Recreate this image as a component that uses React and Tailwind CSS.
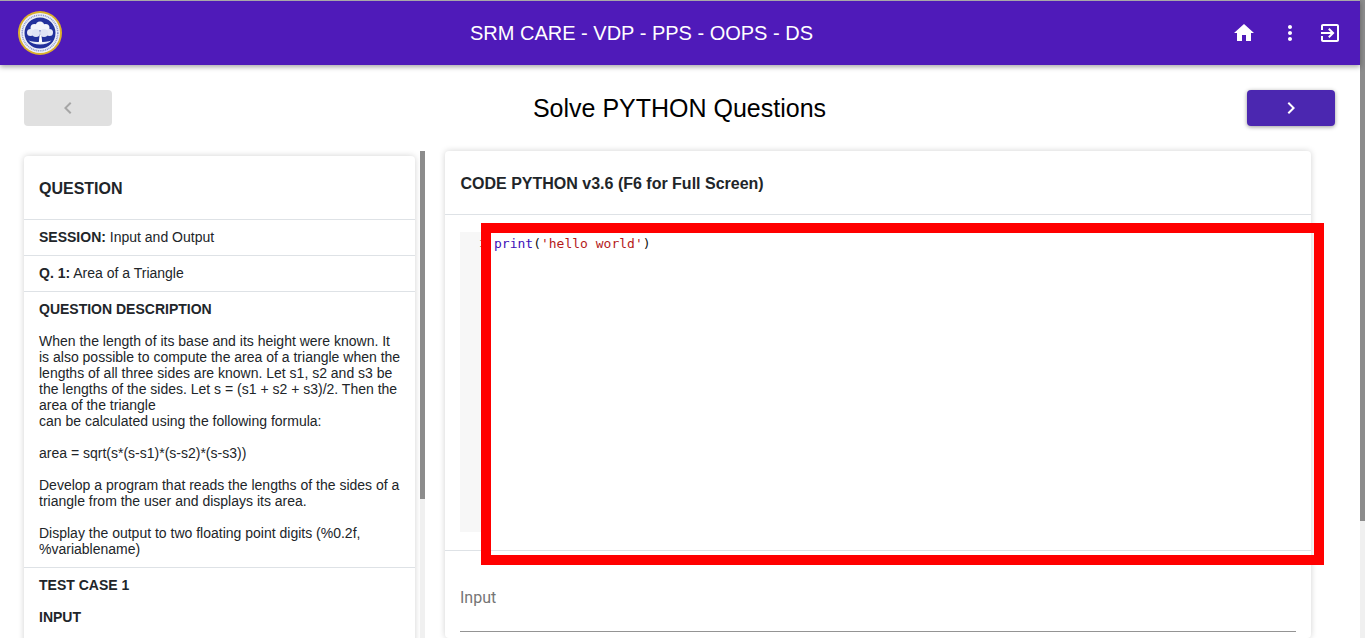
import React from 'react'

const sans = "font-['Liberation_Sans',Arial,sans-serif]"

function Icon({ d, className }) {
  return (
    <svg viewBox="0 0 24 24" fill="currentColor" className={className}>
      <path d={d} />
    </svg>
  )
}

const paths = {
  home: 'M10 20v-6h4v6h5v-8h3L12 3 2 12h3v8z',
  more: 'M12 8c1.1 0 2-.9 2-2s-.9-2-2-2-2 .9-2 2 .9 2 2 2zm0 2c-1.1 0-2 .9-2 2s.9 2 2 2 2-.9 2-2-.9-2-2-2zm0 6c-1.1 0-2 .9-2 2s.9 2 2 2 2-.9 2-2-.9-2-2-2z',
  exit: 'M10.09 15.59L11.5 17l5-5-5-5-1.41 1.41L12.67 11H3v2h9.67l-2.58 2.59zM19 3H5c-1.11 0-2 .9-2 2v4h2V5h14v14H5v-4H3v4c0 1.1.89 2 2 2h14c1.1 0 2-.9 2-2V5c0-1.1-.9-2-2-2z',
  left: 'M15.41 7.41L14 6l-6 6 6 6 1.41-1.41L10.83 12z',
  right: 'M10 6L8.59 7.41 13.17 12l-4.58 4.59L10 18l6-6z',
}

function Logo() {
  return (
    <svg viewBox="0 0 44 44" className="w-11 h-11 shrink-0">
      <circle cx="22" cy="22" r="22" fill="#dcb02c" />
      <circle cx="22" cy="22" r="20" fill="#eef0f9" />
      <circle cx="22" cy="22" r="17.800" fill="none" stroke="#8a94d0" strokeWidth="1.600" strokeDasharray="1 0.800" />
      <circle cx="22" cy="22" r="15.500" fill="#22319c" />
      <path d="M22 33.500c-5 0-9-1.400-11.500-4 3 1.500 8 1.500 11.500 1.500s8.500 0 11.500-1.500c-2.500 2.600-6.500 4-11.500 4z" fill="#e9edf8" />
      <path d="M20.800 31.500l.8-8h1.800l.8 8z" fill="#fff" />
      <circle cx="22" cy="15" r="4.500" fill="#f2f4fb" />
      <circle cx="16.500" cy="17" r="4" fill="#f2f4fb" />
      <circle cx="27.500" cy="17" r="4" fill="#f2f4fb" />
      <circle cx="12.500" cy="21.500" r="3.500" fill="#e6e9f7" />
      <circle cx="31.500" cy="21.500" r="3.500" fill="#e6e9f7" />
      <circle cx="18" cy="22" r="4" fill="#dfe4f5" />
      <circle cx="26" cy="22" r="4" fill="#dfe4f5" />
    </svg>
  )
}

function Row({ children }) {
  return <div className="pl-[15px] pr-[13px] pt-[9px] pb-[10px] border-b border-[#dee2e6] last:border-b-0">{children}</div>
}

function QuestionPanel() {
  return (
    <div className="flex w-[401px] shrink-0 h-full">
      <div className="w-[391px] shrink-0 pt-[5px]">
        <div className="bg-white rounded-[4px] shadow-[0_0_6px_rgba(0,0,0,0.18)] text-[14px] leading-4 text-[#212529]">
          <div className="h-[64px] flex items-center px-[15px] pt-[2px] border-b border-[#dee2e6] text-[16px] font-bold">QUESTION</div>
          <Row><b>SESSION:</b> Input and Output</Row>
          <Row><b>Q. 1:</b> Area of a Triangle</Row>
          <Row>
            <b>QUESTION DESCRIPTION</b>
            <div className="mt-4">
              When the length of its base and its height were known. It is also possible to compute the area of a triangle when the lengths of all three sides are known. Let s1, s2 and s3 be the lengths of the sides. Let s = (s1 + s2 + s3)/2. Then the area of the triangle
              <br />
              can be calculated using the following formula:
              <br /><br />
              area = sqrt(s*(s-s1)*(s-s2)*(s-s3))
              <br /><br />
              Develop a program that reads the lengths of the sides of a triangle from the user and displays its area.
              <br /><br />
              Display the output to two floating point digits (%0.2f, %variablename)
            </div>
          </Row>
          <Row>
            <b>TEST CASE 1</b>
            <div className="mt-4 mb-10 font-bold">INPUT</div>
          </Row>
        </div>
      </div>
      <div className="w-[5px] ml-[5px] shrink-0 bg-[#f0f0f0]">
        <div className="h-[348px] bg-[#8c8c8c]" />
      </div>
    </div>
  )
}

function EditorPanel() {
  return (
    <div className="ml-[20px] w-[866px] shrink-0 bg-white rounded-[4px] shadow-[0_0_6px_rgba(0,0,0,0.18)] text-[#212529]">
      <div className="h-[64px] flex items-center pl-[15.5px] pr-[15px] pt-[2px] border-b border-[#dee2e6] text-[16px] font-bold">
        CODE PYTHON v3.6 (F6 for Full Screen)
      </div>
      <div className="h-[336px] px-[15px] pt-[17px] border-b border-[#dee2e6]">
        <div className="flex h-[300px]">
          <div className="w-[30px] bg-[#f7f7f7] text-right pr-[3px] pt-[2px] font-['Liberation_Mono',monospace] text-[13px] leading-[20px] text-[#777]">1</div>
          <div className="pl-[4px] pt-[2px] font-['DejaVu_Sans_Mono',monospace] text-[13px] leading-[20px] text-[#111]">
            <span className="text-[#3d10b8]">print</span>(<span className="text-[#b51a1a]">'hello world'</span>)
          </div>
        </div>
      </div>
      <div className="px-[15px] pt-[37px]">
        <div className="h-[44px] border-b border-[#949494] font-['Roboto',sans-serif] text-[16px] leading-[20px] text-[#757575]">Input</div>
      </div>
    </div>
  )
}

export default function App() {
  return (
    <div className={`${sans} relative flex h-[638px] w-full overflow-hidden bg-white`}>
      <div className="w-[1360px] shrink-0 flex flex-col">
        <header className="relative z-10 h-[65px] shrink-0 flex items-center pl-[18px] pr-[18px] bg-[#4f1ab9] border-t border-[#a8a8a8] shadow-[0_2px_5px_rgba(0,0,0,0.35)] text-white">
          <Logo />
          <div className="ml-[408px] text-[20px]">SRM CARE - VDP - PPS - OOPS - DS</div>
          <div className="ml-auto flex items-center">
            <Icon d={paths.home} className="w-6 h-6" />
            <Icon d={paths.more} className="w-6 h-6 ml-[22px]" />
            <Icon d={paths.exit} className="w-6 h-6 ml-[16px]" />
          </div>
        </header>

        <div className="flex items-center justify-between h-[36px] mt-[25px] pl-[24px] pr-[25px] shrink-0">
          <button className="w-[88px] h-[36px] rounded-[4px] bg-[#e0e0e0] flex items-center justify-center text-[#a6a6a6]">
            <Icon d={paths.left} className="w-6 h-6" />
          </button>
          <h1 className="pt-[2px] text-[25px] text-black">Solve PYTHON Questions</h1>
          <button className="w-[88px] h-[36px] rounded-[4px] bg-[#4b27b0] shadow-[0_1px_4px_rgba(0,0,0,0.4)] flex items-center justify-center text-white">
            <Icon d={paths.right} className="w-6 h-6" />
          </button>
        </div>

        <div className="flex flex-1 min-h-0 pl-[24px] mt-[25px]">
          <QuestionPanel />
          <EditorPanel />
        </div>
      </div>

      <div className="w-[5px] shrink-0 bg-[#f0f0f0]">
        <div className="h-[521px] bg-[#8c8c8c]" />
      </div>

      {/* red box drawn over the editor */}
      <div className="absolute left-[481px] top-[223px] w-[843px] h-[342px] border-[10px] border-[#ff0000]" />
    </div>
  )
}
